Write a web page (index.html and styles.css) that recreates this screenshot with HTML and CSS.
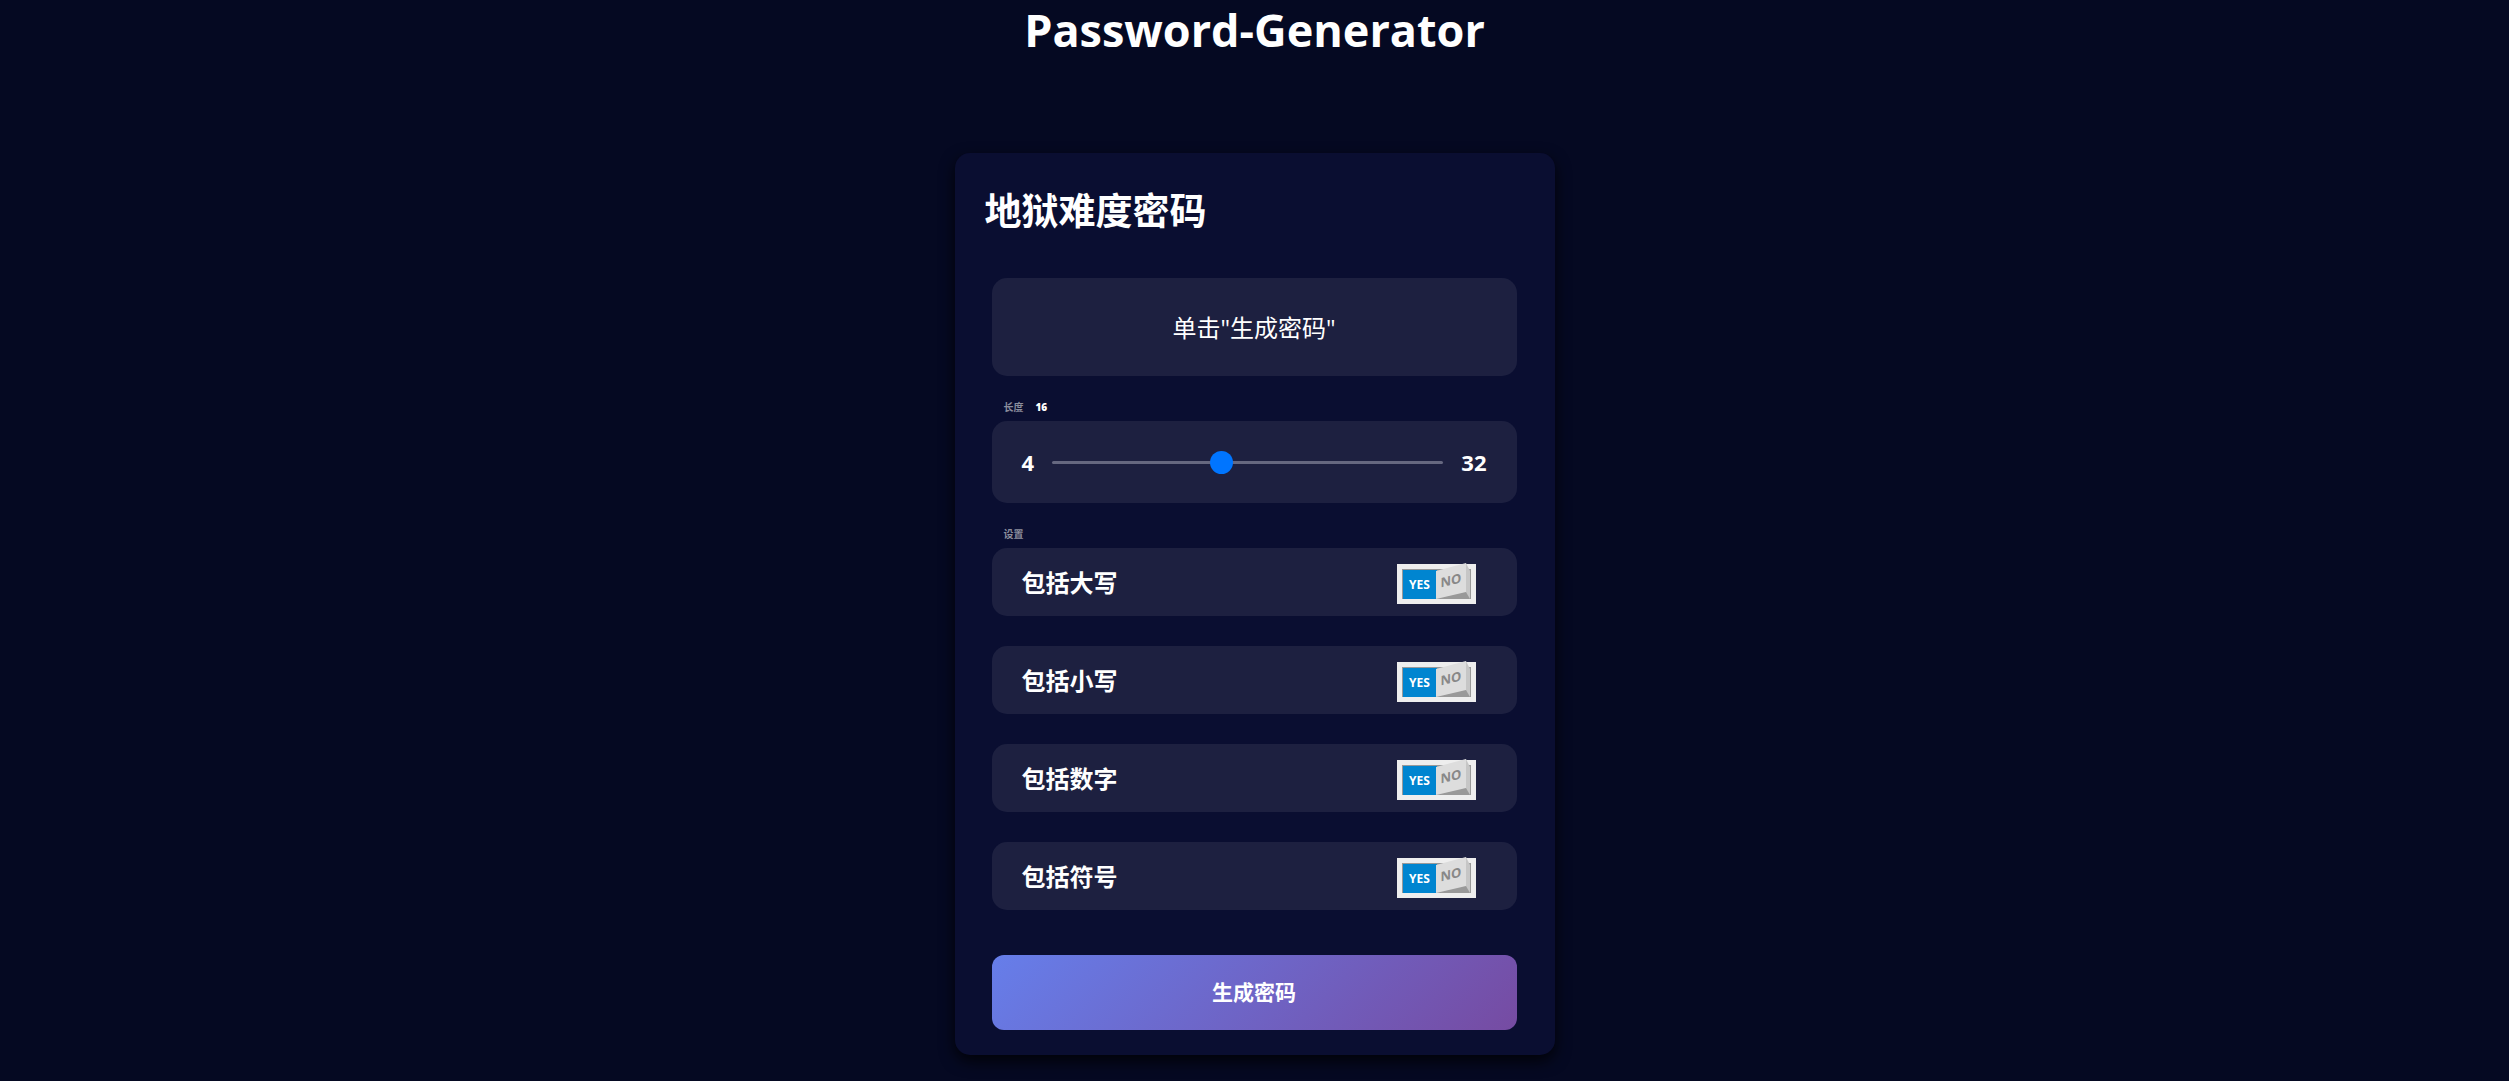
FILE: index.html
```html
<!DOCTYPE html>
<html lang="zh-CN">
<head>
  <meta charset="utf-8">
  <meta name="viewport" content="width=device-width, initial-scale=1">
  <title>Password-Generator</title>
  <link rel="stylesheet" href="styles.css">
</head>
<body>
  <h1 class="page-title">Password-Generator</h1>
  <main class="card">
    <h2 class="card-title">地狱难度密码</h2>
    <form class="controls">
      <output class="panel result">单击"生成密码"</output>

      <div class="caption"><label for="length">长度</label><strong class="length-value">16</strong></div>
      <div class="panel slider">
        <span>4</span>
        <input class="range" id="length" type="range" min="4" max="32" value="16">
        <span>32</span>
      </div>

      <div class="caption">设置</div>
      <div class="settings">
        <div class="panel setting">
          <label for="upper">包括大写</label>
          <span class="switch">
            <input class="switch-input" id="upper" type="checkbox" checked>
            <span class="yes">YES</span>
            <svg class="rocker" viewBox="0 0 35 44" aria-hidden="true"><path fill="#999" d="M0 42 30 35 34 42z"/><path fill="#ddd" d="M0 14 30 6V35L0 42z"/><path fill="#c6c6c6" d="M30 6 34 14V42L30 35z"/></svg>
            <span class="no">NO</span>
          </span>
        </div>
        <div class="panel setting">
          <label for="lower">包括小写</label>
          <span class="switch">
            <input class="switch-input" id="lower" type="checkbox" checked>
            <span class="yes">YES</span>
            <svg class="rocker" viewBox="0 0 35 44" aria-hidden="true"><path fill="#999" d="M0 42 30 35 34 42z"/><path fill="#ddd" d="M0 14 30 6V35L0 42z"/><path fill="#c6c6c6" d="M30 6 34 14V42L30 35z"/></svg>
            <span class="no">NO</span>
          </span>
        </div>
        <div class="panel setting">
          <label for="number">包括数字</label>
          <span class="switch">
            <input class="switch-input" id="number" type="checkbox" checked>
            <span class="yes">YES</span>
            <svg class="rocker" viewBox="0 0 35 44" aria-hidden="true"><path fill="#999" d="M0 42 30 35 34 42z"/><path fill="#ddd" d="M0 14 30 6V35L0 42z"/><path fill="#c6c6c6" d="M30 6 34 14V42L30 35z"/></svg>
            <span class="no">NO</span>
          </span>
        </div>
        <div class="panel setting">
          <label for="symbol">包括符号</label>
          <span class="switch">
            <input class="switch-input" id="symbol" type="checkbox" checked>
            <span class="yes">YES</span>
            <svg class="rocker" viewBox="0 0 35 44" aria-hidden="true"><path fill="#999" d="M0 42 30 35 34 42z"/><path fill="#ddd" d="M0 14 30 6V35L0 42z"/><path fill="#c6c6c6" d="M30 6 34 14V42L30 35z"/></svg>
            <span class="no">NO</span>
          </span>
        </div>
      </div>

      <button class="generate" type="button">生成密码</button>
    </form>
  </main>
</body>
</html>
```
FILE: styles.css
```css
* {
  box-sizing: border-box;
}

body {
  margin: 0;
  min-height: 100vh;
  background: #050922;
  color: #fff;
  font-family: "Open Sans", "Noto Sans CJK SC", sans-serif;
}

.page-title {
  margin: 0 0 93px;
  font-size: 45px;
  line-height: 60px;
  text-align: center;
}

.card {
  width: 100%;
  max-width: 600px;
  margin: 0 auto;
  padding: 30px 30px 25px;
  border-radius: 15px;
  background: #0a0e31;
  box-shadow: 0 6px 15px rgba(0, 0, 0, 0.8);
}

.card-title {
  margin: 0 0 40px;
  font-size: 37px;
  line-height: 55px;
}

.controls {
  display: flex;
  flex-direction: column;
  padding: 0 8px 0 7px;
}

.panel {
  border-radius: 15px;
  background: #1d2040;
}

.result {
  padding: 33px 30px 31px;
  font-size: 24px;
  line-height: 34px;
  text-align: center;
}

.caption {
  display: flex;
  gap: 12px;
  padding: 25px 12px 8px;
  color: #8b8d9c;
  font-size: 10px;
  font-weight: 600;
  line-height: 12px;
}

.length-value {
  color: #fff;
}

.slider {
  display: flex;
  align-items: center;
  gap: 18px;
  padding: 26px 30px;
  font-size: 22px;
  font-weight: 700;
  line-height: 30px;
}

.range {
  flex: 1;
  min-width: 0;
  height: 28px;
  margin: 0;
  background: transparent;
  appearance: none;
}

.range::-webkit-slider-runnable-track {
  height: 3px;
  border-radius: 2px;
  background: #666880;
}

.range::-webkit-slider-thumb {
  width: 23px;
  height: 23px;
  margin-top: -10px;
  border-radius: 50%;
  background: #0075ff;
  appearance: none;
}

.settings {
  display: grid;
  gap: 30px;
}

.setting {
  display: flex;
  align-items: flex-end;
  justify-content: space-between;
  padding: 16px 41px 12px 30px;
  font-size: 24px;
  font-weight: 700;
  line-height: 42px;
}

.setting {
  height: 68px;
}

.switch {
  position: relative;
  display: flex;
  width: 79px;
  height: 40px;
  border: 5px solid #eee;
  background: #999;
  color: #fff;
  font-size: 12px;
  line-height: 32px;
}

.switch-input {
  position: absolute;
  inset: 0;
  z-index: 1;
  width: 100%;
  height: 100%;
  margin: 0;
  opacity: 0;
}

.yes {
  width: 34px;
  margin: 1px 0 0 1px;
  background: #0085d0;
  line-height: 30px;
  text-align: center;
}

.rocker {
  position: absolute;
  top: -12px;
  left: 34px;
  width: 35px;
  height: 44px;
}

.no {
  position: absolute;
  top: -5px;
  left: 34px;
  width: 30px;
  color: #888;
  font-size: 13px;
  text-align: center;
  transform: skewY(-14deg);
}

.generate {
  margin-top: 45px;
  padding: 20px;
  border: 0;
  border-radius: 12px;
  background: linear-gradient(135deg, #667eea 0%, #764ba2 100%);
  color: #fff;
  font: 700 21px/35px "Open Sans", "Noto Sans CJK SC", sans-serif;
}
```
